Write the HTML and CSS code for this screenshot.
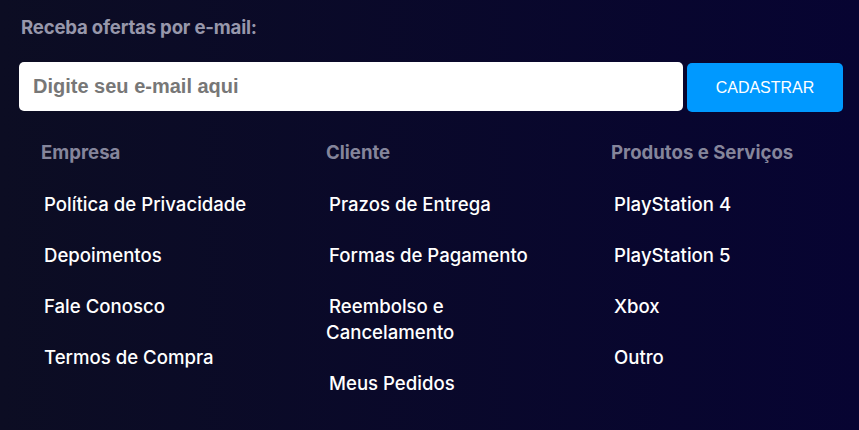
FILE: index.html
```html
<!DOCTYPE html>
<html lang="pt-BR">
<head>
<meta charset="utf-8">
<title>Rodapé</title>
<link rel="stylesheet" href="styles.css">
</head>
<body>
<footer class="footer">
  <div class="newsletter">
    <p class="newsletter-title">Receba ofertas por e-mail:</p>
    <form class="newsletter-form">
      <input class="newsletter-input" type="email" placeholder="Digite seu e-mail aqui">
      <button class="newsletter-btn" type="button">CADASTRAR</button>
    </form>
  </div>
  <div class="cols">
    <div class="col">
      <h3 class="col-title">Empresa</h3>
      <ul class="links">
        <li><a href="#">Política de Privacidade</a></li>
        <li><a href="#">Depoimentos</a></li>
        <li><a href="#">Fale Conosco</a></li>
        <li><a href="#">Termos de Compra</a></li>
      </ul>
    </div>
    <div class="col">
      <h3 class="col-title">Cliente</h3>
      <ul class="links">
        <li><a href="#">Prazos de Entrega</a></li>
        <li><a href="#">Formas de Pagamento</a></li>
        <li><a href="#">Reembolso e Cancelamento</a></li>
        <li><a href="#">Meus Pedidos</a></li>
      </ul>
    </div>
    <div class="col">
      <h3 class="col-title">Produtos e Serviços</h3>
      <ul class="links">
        <li><a href="#">PlayStation 4</a></li>
        <li><a href="#">PlayStation 5</a></li>
        <li><a href="#">Xbox</a></li>
        <li><a href="#">Outro</a></li>
      </ul>
    </div>
  </div>
</footer>
</body>
</html>
```
FILE: styles.css
```css
html, body {
  margin: 0;
  padding: 0;
  height: 100%;
}
body {
  background: linear-gradient(to right, #0c0d23, #070432);
  font-family: Inter, "Noto Sans", sans-serif;
}
.footer {
  padding: 14px 16px 0 19px;
}
.newsletter-title {
  margin: 0 0 0 2px;
  font-size: 18.6px;
  font-weight: 700;
  letter-spacing: -0.2px;
  color: #9797ab;
  line-height: 26px;
}
.newsletter-form {
  display: flex;
  gap: 4px;
  margin-top: 22px;
}
.newsletter-input {
  flex: 1;
  height: 49px;
  box-sizing: border-box;
  border: none;
  border-radius: 5px;
  background: #fff;
  padding: 0 14px;
  font-family: "Liberation Sans", Arial, sans-serif;
  font-size: 20px;
  font-weight: 700;
  outline: none;
}
.newsletter-input::placeholder {
  color: #777777;
  opacity: 1;
}
.newsletter-btn {
  width: 156px;
  height: 49px;
  margin-top: 1px;
  border: none;
  border-radius: 5px;
  background: #0099ff;
  color: #fff;
  font-family: "Liberation Sans", Arial, sans-serif;
  font-size: 16px;
}
.cols {
  display: grid;
  grid-template-columns: repeat(3, 240px);
  column-gap: 45px;
  padding-left: 22px;
  margin-top: 27px;
}
.col-title {
  margin: 0;
  font-size: 18.6px;
  font-weight: 700;
  letter-spacing: 0;
  color: #85859b;
  line-height: 26px;
}
.links {
  list-style: none;
  margin: 26px 0 0;
  padding: 0;
  display: flex;
  flex-direction: column;
  gap: 25px;
}
.links li {
  font-size: 18.6px;
  line-height: 26px;
  text-indent: 3px;
}
.links a {
  color: #fff;
  text-decoration: none;
  font-weight: 500;
}
```
